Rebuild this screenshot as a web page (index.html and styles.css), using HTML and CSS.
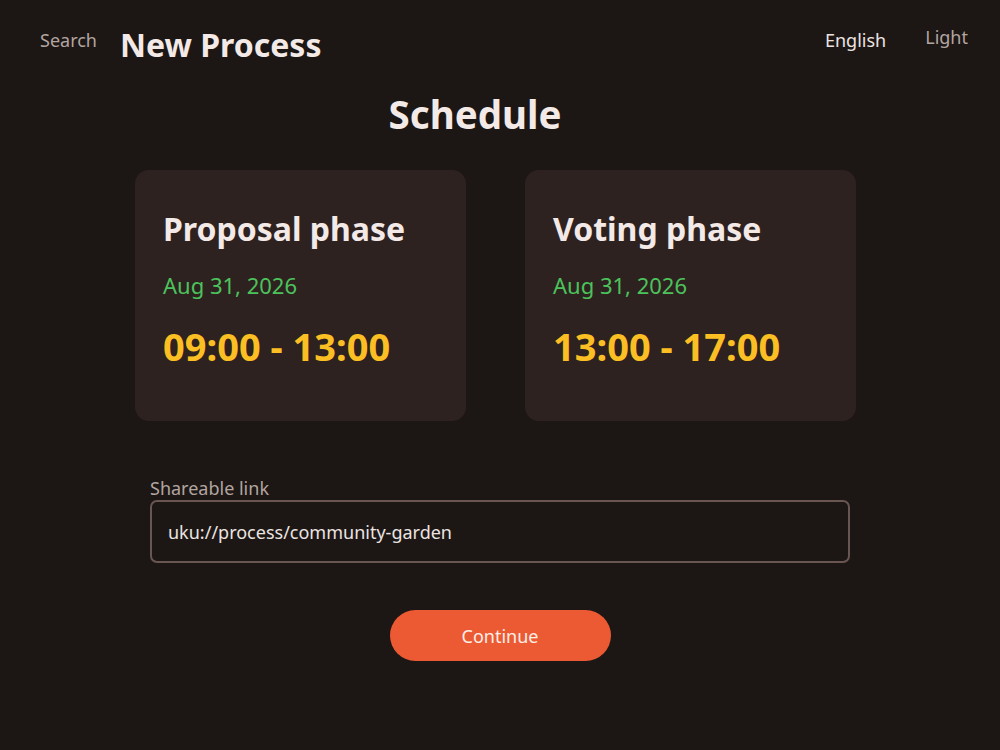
FILE: index.html
```html
<!DOCTYPE html>
<html lang="en">
<head>
<meta charset="utf-8">
<title>New Process</title>
<link rel="stylesheet" href="styles.css">
</head>
<body>
<header class="topbar">
  <a class="nav-link search">Search</a>
  <h1 class="page-title">New Process</h1>
  <div class="spacer"></div>
  <a class="nav-link lang">English</a>
  <a class="nav-link theme">Light</a>
</header>
<main class="content">
  <h2 class="section-title">Schedule</h2>
  <div class="phases">
    <section class="phase-card">
      <h3 class="phase-name">Proposal phase</h3>
      <p class="phase-date">Aug 31, 2026</p>
      <p class="phase-time">09:00 - 13:00</p>
    </section>
    <section class="phase-card">
      <h3 class="phase-name">Voting phase</h3>
      <p class="phase-date">Aug 31, 2026</p>
      <p class="phase-time">13:00 - 17:00</p>
    </section>
  </div>
  <div class="field">
    <label class="field-label">Shareable link</label>
    <div class="field-input">uku://process/community-garden</div>
  </div>
  <button class="primary-btn">Continue</button>
</main>
</body>
</html>
```
FILE: styles.css
```css
html, body {
  margin: 0;
  padding: 0;
  background: #1c1715;
  font-family: "Noto Sans", "Open Sans", sans-serif;
  color: #f3e9e6;
}
.topbar {
  display: flex;
  align-items: flex-start;
  padding: 25px 32px 0 40px;
  height: 62px;
  box-sizing: border-box;
}
.nav-link {
  font-size: 18px;
  color: #b3a5a0;
  margin-top: 3px;
}
.search { margin-right: 23px; }
.page-title {
  margin: 0;
  font-size: 32px;
  font-weight: 700;
  color: #f3e9e6;
  line-height: 1.362;
  margin-top: -2.5px;
}
.spacer { flex: 1; }
.lang { color: #ece4e1; margin-right: 39px; }
.theme { margin-top: 0; }
.content {
  display: flex;
  flex-direction: column;
  align-items: center;
}
.section-title {
  margin: 26px 50px 0 0;
  font-size: 38.5px;
  font-weight: 700;
  line-height: 1.362;
}
.phases {
  display: flex;
  gap: 59px;
  margin-top: 30px;
  margin-right: 9px;
}
.phase-card {
  width: 331px;
  height: 251px;
  box-sizing: border-box;
  background: #2e2220;
  border-radius: 14px;
  padding: 37px 28px 0 28px;
}
.phase-name {
  margin: 0;
  font-size: 32px;
  font-weight: 700;
  line-height: 1.362;
  color: #f3e9e6;
}
.phase-date {
  margin: 20px 0 0;
  font-size: 22px;
  color: #4cc25c;
  line-height: 1.362;
}
.phase-time {
  margin: 20px 0 0;
  font-size: 38px;
  font-weight: 700;
  color: #fbbf24;
  line-height: 1.362;
}
.field {
  width: 700px;
  margin-top: 56px;
  display: flex;
  flex-direction: column;
}
.field-label {
  font-size: 18px;
  color: #b3a5a0;
  line-height: 23px;
}
.field-input {
  height: 63px;
  box-sizing: border-box;
  border: 2px solid #6a5650;
  border-radius: 7px;
  padding: 0 16px;
  display: flex;
  align-items: center;
  font-size: 18px;
  color: #ece4e1;
}
.primary-btn {
  margin-top: 47px;
  width: 221px;
  height: 51px;
  border: none;
  border-radius: 26px;
  background: #ec5a33;
  color: #fdeee8;
  font-family: "Noto Sans", "Open Sans", sans-serif;
  font-size: 18px;
}
```
